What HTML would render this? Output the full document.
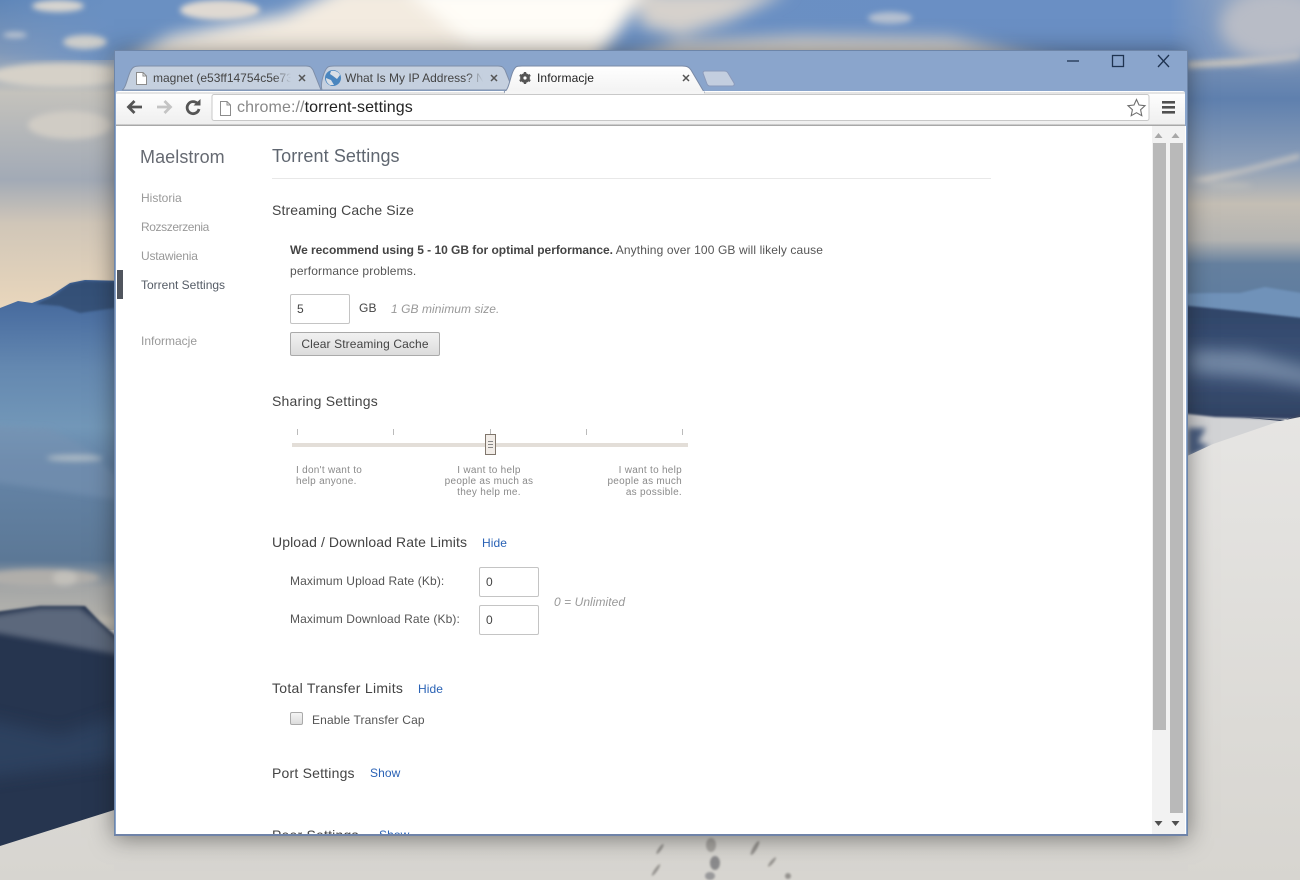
<!DOCTYPE html>
<html><head><meta charset="utf-8">
<style>
html,body{margin:0;padding:0;width:1300px;height:880px;overflow:hidden;background:#d9d7d2}
body{position:relative;font-family:"Liberation Sans",sans-serif}
#bg{position:absolute;left:0;top:0}
#win{position:absolute;left:114px;top:50px;width:1074px;height:786px;background:#8aa5cc;box-shadow:0 2px 22px rgba(20,20,20,.5);border:1px solid #6d85a8;border-bottom:2px solid #6f83a8;box-sizing:border-box}
#ui{position:absolute;left:0;top:0;width:1300px;height:880px}
.t{position:absolute;white-space:nowrap;line-height:16px}
.h{font-size:14px;color:#444;letter-spacing:.2px}
.b{font-size:12px;color:#555;letter-spacing:.14px}
.n{font-size:12px;color:#999}
.l{font-size:12px;color:#2a62b5;letter-spacing:.1px}
.i{font-size:12px;font-style:italic;color:#999;letter-spacing:.06px}
.s{font-size:10px;line-height:11.3px;color:#8a8a8a;letter-spacing:.28px;position:absolute;white-space:nowrap}
.inp{position:absolute;width:60px;height:30px;box-sizing:border-box;border:1px solid #c4c4c4;border-radius:2px;background:#fff;font-size:12px;color:#444;line-height:28px;padding-left:6px}
#content{position:absolute;left:116px;top:126px;width:1070px;height:708px;background:#fff;overflow:hidden}
.tab{position:absolute;top:70px;overflow:hidden;font-size:12px;line-height:16px;color:#444;white-space:nowrap;letter-spacing:0;-webkit-mask-image:linear-gradient(90deg,#000 88%,transparent);mask-image:linear-gradient(90deg,#000 88%,transparent)}
</style></head><body>
<svg id="bg" width="1300" height="880" viewBox="0 0 1300 880">
<defs>
<linearGradient id="skyL" x1="0" y1="0" x2="0" y2="1"><stop offset="0" stop-color="#5f86b8"/><stop offset=".17" stop-color="#7f98ba"/><stop offset=".3" stop-color="#c4c2bc"/><stop offset=".58" stop-color="#a2aab6"/><stop offset=".72" stop-color="#d0c6b8"/><stop offset="1" stop-color="#ead7bc"/></linearGradient>
<linearGradient id="skyR" x1="0" y1="0" x2="0" y2="1"><stop offset="0" stop-color="#98a8c0"/><stop offset=".16" stop-color="#7f96b8"/><stop offset=".33" stop-color="#5f80ae"/><stop offset=".55" stop-color="#8d9fb8"/><stop offset=".68" stop-color="#c4beb4"/><stop offset=".8" stop-color="#b4b4b2"/><stop offset=".88" stop-color="#65809f"/><stop offset="1" stop-color="#5f7d9f"/></linearGradient>
<linearGradient id="mist" gradientUnits="userSpaceOnUse" x1="0" y1="280" x2="0" y2="630"><stop offset="0" stop-color="#3f6296"/><stop offset=".12" stop-color="#4f73a4"/><stop offset=".25" stop-color="#6488b0"/><stop offset=".42" stop-color="#7297b8"/><stop offset=".52" stop-color="#6585a8"/><stop offset=".8" stop-color="#5c7896"/><stop offset=".88" stop-color="#a4a6a6"/><stop offset="1" stop-color="#bdbab2"/></linearGradient>
<linearGradient id="top" x1="0" y1="0" x2="1" y2="0"><stop offset="0" stop-color="#6f95c8" stop-opacity="0"/><stop offset=".09" stop-color="#6a90c2"/><stop offset=".9" stop-color="#6a8fc4"/><stop offset="1" stop-color="#98a8c0" stop-opacity="0"/></linearGradient>
<linearGradient id="snow" gradientUnits="userSpaceOnUse" x1="0" y1="415" x2="0" y2="880"><stop offset="0" stop-color="#e6e5e3"/><stop offset="1" stop-color="#d7d5d0"/></linearGradient>
<linearGradient id="hill" x1="0" y1="0" x2="0" y2="1"><stop offset="0" stop-color="#2f4468"/><stop offset=".5" stop-color="#3d5478"/><stop offset="1" stop-color="#2f4060"/></linearGradient>
<filter id="b8" x="-30%" y="-50%" width="160%" height="200%"><feGaussianBlur stdDeviation="8"/></filter>
<filter id="b3" x="-20%" y="-50%" width="140%" height="200%"><feGaussianBlur stdDeviation="3"/></filter>
<filter id="b1"><feGaussianBlur stdDeviation="1"/></filter>
</defs>
<rect width="1300" height="880" fill="url(#snow)"/>
<rect x="0" y="0" width="130" height="310" fill="url(#skyL)"/>
<rect x="1170" y="0" width="130" height="300" fill="url(#skyR)"/>
<rect x="0" y="0" width="1300" height="60" fill="url(#top)"/>
<!-- top clouds -->
<g filter="url(#b8)">
<path d="M105 70L170 36 230 24 285 14 345 -15 655 -15 620 30 590 70Z" fill="#f3ebe0"/>
<path d="M400 -15H640L600 45 470 45Z" fill="#fffdf7"/>
<path d="M585 70L680 42 800 36 950 38 1090 70Z" fill="#d9d4ce"/>
<path d="M640 -10H790L730 20 680 36 640 26Z" fill="#d6d1cc"/>
</g>
<g filter="url(#b3)">
<ellipse cx="220" cy="10" rx="40" ry="10" fill="#dfd9d2"/>
<ellipse cx="58" cy="6" rx="26" ry="6" fill="#d8d5d0"/>
<ellipse cx="85" cy="42" rx="22" ry="7" fill="#cdcdca"/>
<ellipse cx="890" cy="18" rx="22" ry="6" fill="#b4bfd0"/>
<ellipse cx="15" cy="35" rx="12" ry="3" fill="#bcc4d0"/>
<ellipse cx="60" cy="75" rx="70" ry="12" fill="#d6d1c8"/>
<ellipse cx="70" cy="125" rx="42" ry="14" fill="#d0ccc5"/>
<path d="M1188 62L1240 58 1300 52 1300 58 1240 66 1188 68Z" fill="#c8c4be"/>
<path d="M1190 180L1240 170 1300 154 1300 158 1230 176 1205 182Z" fill="#d2ccc4"/>
<ellipse cx="1230" cy="186" rx="22" ry="3" fill="#b8baba"/>
</g>
<ellipse cx="1275" cy="25" rx="55" ry="36" fill="#b8bcc6" filter="url(#b8)"/>
<!-- left mountains -->
<path d="M-10 310L0 308 18 301 32 303 50 296 70 283 85 280 130 281V630H-10Z" fill="url(#mist)"/>
<path d="M36 304L55 295 70 284 85 281 115 282V308L80 313 60 306Z" fill="#2f4669" opacity=".7" filter="url(#b1)"/>
<g filter="url(#b3)">
<path d="M-20 425L50 428 90 450 120 480 120 500 -20 480Z" fill="#7693b2" opacity=".6"/>
<ellipse cx="75" cy="458" rx="28" ry="3" fill="#aebcc6"/>
<ellipse cx="40" cy="578" rx="60" ry="9" fill="#b0aeaa"/>
<ellipse cx="65" cy="578" rx="12" ry="8" fill="#c2c0ba"/>
<ellipse cx="105" cy="622" rx="16" ry="5" fill="#c6c2b8"/>
</g>
<path d="M-20 614L40 606 85 606 100 622 120 640V830L-20 855Z" fill="#27364f" filter="url(#b1)"/>
<path d="M-20 618L40 608 80 608 98 622 120 642V655L60 644 -20 630Z" fill="#5b677c" filter="url(#b3)"/>
<path d="M-30 715L60 735 120 715V760L-30 780Z" fill="#33486a" opacity=".6" filter="url(#b8)"/>
<path d="M-10 849L0 846 130 805V880H-10Z" fill="url(#snow)"/>
<!-- right mountains -->
<path d="M1170 294L1210 293 1240 293 1265 287 1320 296V325H1170Z" fill="#6f92b9" filter="url(#b1)"/>
<path d="M1170 304L1250 312 1320 320V425H1170Z" fill="url(#hill)" filter="url(#b1)"/>
<path d="M1190 350L1250 352 1320 372V388L1260 378 1190 372Z" fill="#7489a6" filter="url(#b8)"/>
<path d="M1170 412L1215 417 1320 420V470H1170Z" fill="#d2d3d5" filter="url(#b1)"/>
<path d="M1188 428L1206 428 1198 442 1210 446 1188 458Z" fill="#4b6184" filter="url(#b3)"/>
<path d="M1170 464L1213 444 1280 421 1300 415V880H1170Z" fill="url(#snow)"/>
<path d="M1240 417L1285 420 1300 414V417L1280 421Z" fill="#3a4660"/>
<!-- footprints -->
<g fill="#94928e" filter="url(#b1)">
<ellipse cx="711" cy="845" rx="5" ry="7" fill="#a8a6a2"/>
<ellipse cx="715" cy="863" rx="5" ry="7" fill="#8a8a8c"/>
<ellipse cx="710" cy="876" rx="5" ry="4" fill="#98989a"/>
<ellipse cx="660" cy="849" rx="1.500" ry="6" transform="rotate(35 660 849)"/>
<ellipse cx="755" cy="848" rx="2" ry="8" transform="rotate(30 755 848)"/>
<ellipse cx="772" cy="862" rx="1.500" ry="6" transform="rotate(40 772 862)"/>
<ellipse cx="656" cy="870" rx="1.500" ry="7" transform="rotate(35 656 870)"/>
<ellipse cx="788" cy="876" rx="3" ry="3"/>
</g>
</svg>

<div id="win"></div>

<svg id="ui" width="1300" height="880" viewBox="0 0 1300 880">
<!-- inactive tabs -->
<path d="M122 90C127 88 128 70 134 67 136 66 137 66 140 66H306C310 66 311 67 313 70L321 90Z" fill="#c5d0df" stroke="#7e8ea8"/>
<path d="M316 90L322 90C320 84 324 70 328 67 330 66 332 66 334 66H498C502 66 503 67 505 70L513 90Z" fill="#c5d0df" stroke="#7e8ea8"/>
<!-- new tab -->
<path d="M703 73Q703 71 705 71H724Q727 71 728 73L734 83Q735 86 732 86H710Q708 86 707 84Z" fill="#c3cedf" stroke="#8a9abb"/>
<!-- toolbar -->
<defs><linearGradient id="tb" x1="0" y1="0" x2="0" y2="1"><stop offset="0" stop-color="#ffffff"/><stop offset="1" stop-color="#eeeeee"/></linearGradient>
<linearGradient id="at" x1="0" y1="0" x2="0" y2="1"><stop offset="0" stop-color="#ffffff"/><stop offset="1" stop-color="#f3f3f3"/></linearGradient></defs>
<path d="M116 93Q116 91 119 91H1182Q1185 91 1185 93V126H116Z" fill="url(#tb)"/>
<rect x="116" y="92.500" width="1069" height="1" fill="#9a9a9a" opacity=".5"/>
<rect x="116" y="124.500" width="1069" height="1.500" fill="#a8a8a8"/>
<!-- active tab -->
<path d="M504 92C510 90 510 72 516 67 517 66 519 66 522 66H682C687 66 689 67 691 70L704 92Z" fill="url(#at)" stroke="#7a8aa6"/>
<rect x="505" y="91" width="199" height="3" fill="#f5f5f5"/>
<!-- omnibox -->
<rect x="212" y="94.500" width="937" height="26" rx="2" fill="#fff" stroke="#c8c8c8"/>
<!-- tab icons -->
<g fill="#fff" stroke="#8c8c8c" stroke-width="1">
<path d="M136.500 72.500H143L146.500 76V84.500H136.500Z"/><path d="M143 72.500V76H146.500" fill="none"/>
<path d="M220.500 101.500H227L230.500 105V115.500H220.500Z"/><path d="M227 101.500V105H230.500" fill="none"/>
</g>
<circle cx="333" cy="78" r="8" fill="#4a86bf"/>
<path d="M331 71C335 70 339 72 340 75L337 79 333 76 330 74ZM326 78L331 80 334 85 330 85C327 83 326 81 326 78Z" fill="#d9dfe6"/>
<g transform="translate(525 78)"><circle r="3.600" fill="none" stroke="#555" stroke-width="2.600"/><g stroke="#555" stroke-width="2.400"><path d="M0-6V6M-5.200-3L5.200 3M-5.200 3L5.200-3"/></g><circle r="1.600" fill="#fff"/></g>
<!-- tab close -->
<g stroke="#555" stroke-width="1.500" fill="none">
<path d="M299 75L305 81M305 75L299 81"/><path d="M491 75L497 81M497 75L491 81"/><path d="M683 75L689 81M689 75L683 81"/>
</g>
<!-- window controls -->
<path d="M1067 61H1079" stroke="#1f3350" stroke-width="1.300"/>
<rect x="1112.500" y="55.500" width="11" height="11" fill="none" stroke="#1f3350" stroke-width="1.300"/>
<path d="M1158 55L1169 67M1169 55L1158 67" stroke="#1f3350" stroke-width="1.300"/>
<!-- nav -->
<path d="M142 107H129M134.500 101L128.500 107L134.500 113" fill="none" stroke="#555" stroke-width="2.800"/>
<path d="M157 107H170M164.500 101L170.500 107L164.500 113" fill="none" stroke="#c4c4c4" stroke-width="2.800"/>
<path d="M197.500 103.500A6 6 0 1 0 199 109" fill="none" stroke="#555" stroke-width="2.800"/>
<path d="M193.500 105.500H200.500V99Z" fill="#555"/>
<path d="M1136.500 99.500L1139 105 1145 105.700 1140.600 109.700 1141.800 115.700 1136.500 112.700 1131.200 115.700 1132.400 109.700 1128 105.700 1134 105Z" fill="#fff" stroke="#6e6e6e" stroke-width="1.100"/>
<g fill="#505050"><rect x="1162" y="101" width="13" height="2.600"/><rect x="1162" y="106" width="13" height="2.600"/><rect x="1162" y="111" width="13" height="2.600"/></g>
</svg>

<!-- tab text -->
<div class="tab" style="left:153px;width:138px">magnet (e53ff14754c5e738a</div>
<div class="tab" style="left:345px;width:138px">What Is My IP Address? Na</div>
<div style="position:absolute;left:537px;top:70px;font-size:12px;line-height:16px;color:#222;white-space:nowrap;letter-spacing:.1px">Informacje</div>
<div style="position:absolute;left:237px;top:99px;font-size:16px;line-height:18px;color:#888;white-space:nowrap;letter-spacing:.1px">chrome://<span style="color:#222">torrent-settings</span></div>

<div id="content">
<!-- scrollbars -->
<div style="position:absolute;left:1036px;top:0;width:33px;height:708px;background:#f2f2f2"></div>
<div style="position:absolute;left:1037px;top:17px;width:13px;height:587px;background:#b9b9b9"></div>
<div style="position:absolute;left:1054px;top:17px;width:13px;height:670px;background:#b9b9b9"></div>
<svg style="position:absolute;left:1036px;top:0" width="33" height="708">
<path d="M2.500 12L6.500 7 10.500 12ZM19.500 12L23.500 7 27.500 12Z" fill="#a8a8a8"/>
<path d="M2.500 695H10.500L6.500 700ZM19.500 695H27.500L23.500 700Z" fill="#505050"/>
</svg>
<!-- sidebar -->
<div style="position:absolute;left:1px;top:144px;width:6px;height:29px;background:#50555e"></div>
<div class="t" style="left:24px;top:21px;font-size:18px;line-height:20px;color:#666a72;letter-spacing:.08px">Maelstrom</div>
<div class="t n" style="left:25px;top:64px">Historia</div>
<div class="t n" style="left:25px;top:93px;letter-spacing:-.4px">Rozszerzenia</div>
<div class="t n" style="left:25px;top:122px;letter-spacing:-.2px">Ustawienia</div>
<div class="t" style="left:25px;top:151px;font-size:12px;color:#555c66">Torrent Settings</div>
<div class="t n" style="left:25px;top:207px">Informacje</div>
<!-- header -->
<div class="t" style="left:156px;top:20px;font-size:18px;line-height:20px;color:#5f6670;letter-spacing:.1px">Torrent Settings</div>
<div style="position:absolute;left:156px;top:52px;width:719px;height:1px;background:#e8e8e8"></div>
<!-- cache -->
<div class="t h" style="left:156px;top:76px;letter-spacing:.14px">Streaming Cache Size</div>
<div class="t b" style="left:174px;top:116px;letter-spacing:.12px"><b style="color:#444;letter-spacing:-.03px">We recommend using 5 - 10 GB for optimal performance.</b> Anything over 100 GB will likely cause</div>
<div class="t b" style="left:174px;top:137px">performance problems.</div>
<div class="inp" style="left:174px;top:168px">5</div>
<div class="t b" style="left:243px;top:174px;color:#444">GB</div>
<div class="t i" style="left:275px;top:175px">1 GB minimum size.</div>
<div style="position:absolute;left:174px;top:206px;width:150px;height:24px;box-sizing:border-box;border:1px solid #aaa;border-radius:2px;background:linear-gradient(#f1f1f1,#dcdcdc);font-size:12px;line-height:22px;color:#444;text-align:center;letter-spacing:.12px;white-space:nowrap">Clear Streaming Cache</div>
<!-- sharing -->
<div class="t h" style="left:156px;top:267px">Sharing Settings</div>
<div style="position:absolute;left:176px;top:317px;width:396px;height:3.500px;background:#e3ded8"></div>
<svg style="position:absolute;left:176px;top:300px" width="400" height="34">
<path d="M5.500 3V9M101.500 3V9M198.500 3V9M294.500 3V9M390.500 3V9" stroke="#bbb" stroke-width="1"/>
<rect x="193.500" y="8.500" width="10" height="20" fill="#f2ede8" stroke="#80766c"/>
<path d="M196 15.500H201M196 18.500H201M196 21.500H201" stroke="#888" stroke-width="1"/>
</svg>
<div class="s" style="left:180px;top:338.500px">I don't want to<br>help anyone.</div>
<div class="s" style="left:323px;top:338.500px;width:100px;text-align:center">I want to help<br>people as much as<br>they help me.</div>
<div class="s" style="left:466px;top:338.500px;width:100px;text-align:right">I want to help<br>people as much<br>as possible.</div>
<!-- rate -->
<div class="t h" style="left:156px;top:408px;letter-spacing:.1px">Upload / Download Rate Limits</div>
<div class="t l" style="left:366px;top:409px">Hide</div>
<div class="t b" style="left:174px;top:447px;letter-spacing:.12px">Maximum Upload Rate (Kb):</div>
<div class="t b" style="left:174px;top:485px;letter-spacing:.12px">Maximum Download Rate (Kb):</div>
<div class="inp" style="left:363px;top:441px">0</div>
<div class="inp" style="left:363px;top:479px">0</div>
<div class="t i" style="left:438px;top:468px">0 = Unlimited</div>
<!-- transfer -->
<div class="t h" style="left:156px;top:554px;letter-spacing:.28px">Total Transfer Limits</div>
<div class="t l" style="left:302px;top:555px">Hide</div>
<div style="position:absolute;left:174px;top:586px;width:13px;height:13px;box-sizing:border-box;border:1px solid #aaa;border-radius:2px;background:linear-gradient(#f4f4f4,#dcdcdc)"></div>
<div class="t b" style="left:196px;top:586px">Enable Transfer Cap</div>
<!-- port -->
<div class="t h" style="left:156px;top:639px">Port Settings</div>
<div class="t l" style="left:254px;top:639px">Show</div>
<div class="t h" style="left:156px;top:701px">Peer Settings</div>
<div class="t l" style="left:263px;top:701px">Show</div>
</div>
</body></html>
